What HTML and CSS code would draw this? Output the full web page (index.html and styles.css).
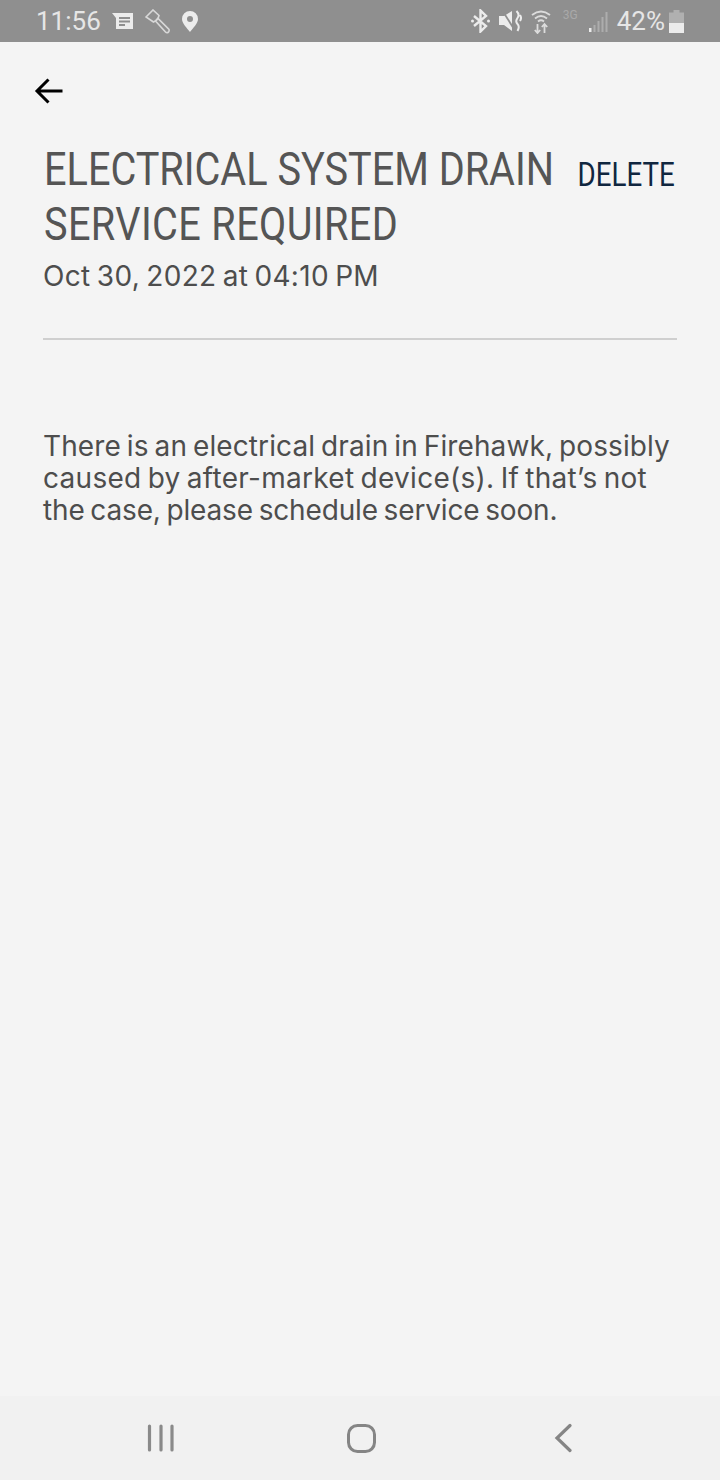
FILE: index.html
```html
<!DOCTYPE html>
<html lang="en">
<head>
<meta charset="utf-8">
<title>Message</title>
<link rel="stylesheet" href="styles.css">
</head>
<body>
<div class="phone">
  <header class="status">
    <div class="status-left">
      <span class="clock">11:56</span>
      <svg class="ic" width="21" height="18" viewBox="0 0 21 18"><path d="M0 1H21V17H4V6Z" fill="#ececec"/><path d="M7 6H18M7 9.500H18M7 13H13" stroke="#8f8f8f" stroke-width="2"/></svg>
      <svg class="ic" width="25" height="25" viewBox="0 0 25 25"><g fill="none" stroke="#d8d8d8" stroke-width="1.600"><path d="M1 8L8 1L14 6.500Q13 11 8.500 13Z"/><path d="M10.500 12L13 9.500L24 20.500Q24.500 22.500 23 23.500Q21.500 24 20.500 23Z"/></g></svg>
      <svg class="ic" width="16" height="21" viewBox="0 0 16 21"><path fill-rule="evenodd" d="M8 0A8 8 0 0 1 16 8C16 12.500 11 17 8 21C5 17 0 12.500 0 8A8 8 0 0 1 8 0ZM8 5A3 3 0 1 0 8 11A3 3 0 1 0 8 5Z" fill="#ececec"/></svg>
    </div>
    <div class="status-right">
      <svg class="ic" width="19" height="24" viewBox="0 0 19 24"><path d="M3 7L15 17L9.500 22.500V1.500L15 7L3 17" fill="none" stroke="#ececec" stroke-width="2.400"/><circle cx="1.500" cy="12" r="1.500" fill="#ececec"/><circle cx="17.500" cy="12" r="1.500" fill="#ececec"/></svg>
      <svg class="ic" width="23" height="22" viewBox="0 0 23 22"><path d="M0 6H5L13 1V21L5 15H0Z" fill="#ececec"/><path d="M3 0L15 19" stroke="#8f8f8f" stroke-width="1.800"/><path d="M17.500 1Q21 4.500 18.500 8T18.500 14T18.500 21M21 5Q23 8 21 11" fill="none" stroke="#ececec" stroke-width="2"/></svg>
      <svg class="ic" width="20" height="25" viewBox="0 0 20 25"><g fill="none" stroke="#dcdcdc" stroke-width="1.800"><path d="M1 6Q10 -1 19 6"/><path d="M4 9.500Q10 4.500 16 9.500"/><path d="M7 12.500Q10 10 13 12.500"/><path d="M6.500 15V24M3.800 21L6.500 24L9.200 21M13.500 24V15M10.800 18L13.500 15L16.200 18"/></g></svg>
      <span class="net">3G</span>
      <svg class="ic" width="19" height="23" viewBox="0 0 19 23"><path d="M0 18H2.500V22H0Z" fill="#ececec"/><path d="M4.500 15H6.500V22H4.500ZM8.500 11H10.500V22H8.500ZM12.500 7H14.500V22H12.500ZM16.500 2H18.500V22H16.500Z" fill="#adadad"/></svg>
      <span class="batt-text">42%</span>
      <svg class="ic batt" width="15" height="23" viewBox="0 0 15 23"><path d="M4.500 0H10.500V2.500H15V23H0V2.500H4.500Z" fill="#b0b0b0"/><path d="M0 13H15V23H0Z" fill="#ececec"/></svg>
    </div>
  </header>

  <main class="content">
    <button class="back" aria-label="Back">
      <svg width="30" height="28" viewBox="0 0 30 28"><path d="M28.500 14H3M14.500 2.500L3 14L14.500 25.500" fill="none" stroke="#000" stroke-width="3"/></svg>
    </button>
    <div class="head">
      <h1 class="title"><span>ELECTRICAL SYSTEM DRAIN</span><span class="title-second">SERVICE REQUIRED</span></h1>
      <a class="delete">DELETE</a>
    </div>
    <p class="date">Oct 30, 2022 at 04:10 PM</p>
    <hr class="rule">
    <p class="body"><span class="l1">There is an electrical drain in Firehawk, possibly</span><span class="l2">caused by after-market device(s). If that’s not</span><span class="l3">the case, please schedule service soon.</span></p>
  </main>

  <nav class="navbar">
    <svg width="28" height="30" viewBox="0 0 28 30"><path d="M2.500 3V27M14 3V27M25 3V27" stroke="#8a8a8a" stroke-width="3.200" stroke-linecap="round"/></svg>
    <svg class="home" width="31" height="31" viewBox="0 0 31 31"><rect x="2.500" y="2.500" width="26" height="26" rx="9" fill="none" stroke="#858585" stroke-width="3"/></svg>
    <svg class="tri" width="18" height="30" viewBox="0 0 18 30"><path d="M16 2.500L3 15L16 27.500" fill="none" stroke="#858585" stroke-width="3.200" stroke-linecap="round"/></svg>
  </nav>
</div>
</body>
</html>
```

FILE: styles.css
```css
* { box-sizing: border-box; }
html, body { margin: 0; padding: 0; }
.phone {
  width: 720px;
  height: 1480px;
  background: #f4f4f4;
  display: flex;
  flex-direction: column;
  overflow: hidden;
  font-family: "Inter", "Noto Sans", sans-serif;
}
.status {
  height: 42px;
  background: #8f8f8f;
  color: #e6e6e6;
  display: flex;
  justify-content: space-between;
  align-items: center;
  padding: 0 36px 0 36px;
  font-family: "Roboto", sans-serif;
}
.status-left, .status-right { display: flex; align-items: center; }
.status-left { gap: 12px; }
.status-right { gap: 9px; }
.clock { font-size: 26px; margin-right: -1px; }
.ic { display: block; }
.net { font-size: 12px; color: #a9a9a9; margin: 0 0 12px 3px; width: 17px; }
.batt-text { font-size: 26px; margin-right: -5px; }
.content { flex: 1; padding: 0 43px; }
.back {
  display: block;
  border: 0;
  background: none;
  padding: 0;
  margin: 35px 0 0 -9px;
  height: 28px;
  width: 30px;
}
.head {
  display: flex;
  justify-content: space-between;
  align-items: flex-start;
  margin-top: 37px;
}
.title {
  margin: 0;
  width: 510px;
  font-family: "Roboto", sans-serif;
  font-weight: 400;
  font-size: 46px;
  line-height: 55px;
  color: #555;
}
.title span {
  display: block;
  white-space: nowrap;
  transform: scaleX(.862);
  transform-origin: left center;
  margin-left: 1px;
}
.title .title-second { letter-spacing: .43px; }
.delete {
  font-family: "Roboto", sans-serif;
  font-size: 33px;
  line-height: 40px;
  margin: 13px 2px 0 0;
  color: #10263f;
  transform: scaleX(.84);
  transform-origin: right center;
  white-space: nowrap;
}
.date {
  margin: 8px 0 0;
  font-size: 28px;
  line-height: 32px;
  color: #4d4d4d;
  word-spacing: -2px;
  letter-spacing: .33px;
}
.rule {
  border: 0;
  height: 2px;
  background: #cfcfcf;
  margin: 46px 0 0;
}
.body {
  margin: 90px 0 0;
  font-size: 28px;
  line-height: 32px;
  color: #4d4d4d;
  white-space: nowrap;
  word-spacing: -2px;
}
.body span { display: block; }
.body .l1 { letter-spacing: .1px; }
.body .l2 { letter-spacing: .29px; }
.body .l3 { letter-spacing: -.15px; }
.navbar {
  height: 84px;
  background: #f1f1f1;
  display: flex;
  align-items: center;
  padding-left: 147px;
}
.home { margin-left: 171px; }
.tri { margin-left: 177px; }
```
